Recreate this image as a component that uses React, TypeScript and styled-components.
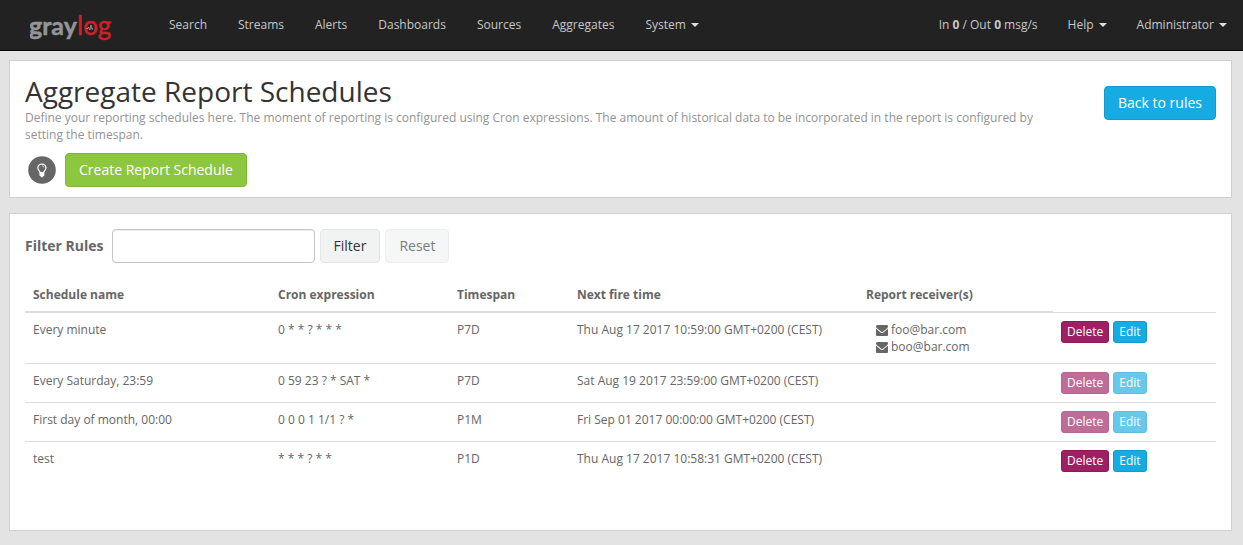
import React from "react";
import styled, { createGlobalStyle } from "styled-components";

const GlobalStyle = createGlobalStyle`
  *, *::before, *::after { box-sizing: border-box; }
  body {
    margin: 0;
    background: #e3e3e3;
    color: #666;
    font-family: "Open Sans", sans-serif;
    font-size: 12px;
    line-height: 17px;
  }
`;

const Navbar = styled.nav`
  display: flex;
  align-items: center;
  height: 51px;
  padding: 0 1px 0 30px;
  background: #222;
  border-bottom: 1px solid #080808;
`;

const Brand = styled.a`
  display: block;
  height: 36px;
  margin-right: 40px;
`;

const LogoText = styled.text<{ $red?: boolean }>`
  font-family: Lato, sans-serif;
  font-size: ${(p) => (p.$red ? 26 : 25)}px;
  font-weight: ${(p) => (p.$red ? 400 : 700)};
  fill: ${(p) => (p.$red ? "#cf2027" : "#939598")};
  stroke: ${(p) => (p.$red ? "#cf2027" : "#939598")};
  stroke-width: 0.5px;
`;

const NavList = styled.ul<{ $end?: boolean }>`
  display: flex;
  gap: ${(p) => (p.$end ? 0 : 1)}px;
  margin: 0;
  margin-left: ${(p) => (p.$end ? "auto" : 0)};
  padding: 0;
  list-style: none;
`;

const NavLink = styled.a`
  display: flex;
  align-items: center;
  padding: 15px;
  line-height: 20px;
  color: #c8c8c8;
  text-decoration: none;
  white-space: pre;
`;

const Caret = styled.span`
  margin-left: 5px;
  border-top: 4px solid #ddd;
  border-left: 4px solid transparent;
  border-right: 4px solid transparent;
`;

const Main = styled.main`
  display: flex;
  flex-direction: column;
  gap: 15px;
  padding: 9px 11px 14px 9px;
`;

const Panel = styled.section`
  padding: 15px;
  background: #fff;
  border: 1px solid #d1d1d1;
`;

const HeaderPanel = styled(Panel)`
  display: flex;
  justify-content: space-between;
  align-items: flex-start;
  padding-bottom: 10px;
`;

const RulesPanel = styled(Panel)`
  padding-bottom: 50px;
`;

const Intro = styled.div`
  width: 85%;
`;

const Title = styled.h1`
  margin: 0 0 2px;
  font-size: 28px;
  line-height: 31px;
  font-weight: 400;
  color: #333;
`;

const Description = styled.p`
  margin: 0 0 10px;
  color: #939393;
`;

const ActionRow = styled.div`
  display: flex;
  align-items: center;
  gap: 9px;
  padding-left: 3px;
`;

const tones = {
  success: { bg: "#8dc63f", line: "#7fb536", text: "#fff" },
  info: { bg: "#16ace3", line: "#1499ca", text: "#fff" },
  primary: { bg: "#9e1f63", line: "#891b56", text: "#fff" },
  plain: { bg: "#f1f3f3", line: "#e2e5e5", text: "#333" },
};

const Button = styled.button<{ $tone: keyof typeof tones; $small?: boolean }>`
  height: ${(p) => (p.$small ? 22 : 34)}px;
  padding: 0 ${(p) => (p.$small ? 5 : 13)}px;
  border: 1px solid ${(p) => tones[p.$tone].line};
  border-radius: ${(p) => (p.$small ? 3 : 4)}px;
  background: ${(p) => tones[p.$tone].bg};
  color: ${(p) => tones[p.$tone].text};
  font-family: inherit;
  font-size: ${(p) => (p.$small ? 12 : 14)}px;
  line-height: ${(p) => (p.$small ? 18 : 20)}px;
  white-space: nowrap;
  cursor: pointer;
  &:disabled {
    opacity: 0.65;
    cursor: not-allowed;
  }
`;

const BackButton = styled(Button)`
  margin-top: 10px;
`;

const FilterForm = styled.form`
  display: flex;
  align-items: center;
  gap: 5px;
  margin-bottom: 15px;
`;

const FilterLabel = styled.label`
  margin-right: 3px;
  font-size: 14px;
  line-height: 20px;
  font-weight: 700;
`;

const FilterInput = styled.input`
  width: 203px;
  height: 34px;
  padding: 6px 12px;
  border: 1px solid #c4c4c4;
  border-radius: 4px;
  background: #fff;
  box-shadow: inset 0 1px 1px rgba(0, 0, 0, 0.08);
  font: inherit;
  font-size: 14px;
`;

const Table = styled.table`
  width: 100%;
  table-layout: fixed;
  border-collapse: collapse;
`;

const Col = styled.col<{ $width: number }>`
  width: ${(p) => p.$width}px;
`;

const HeadCell = styled.th`
  padding: 8px;
  border-bottom: 2px solid #ddd;
  text-align: left;
  font-weight: 700;
`;

const Cell = styled.td`
  padding: 8px;
  border-top: 1px solid #ddd;
  vertical-align: top;
`;

const Buttons = styled.div`
  display: flex;
  gap: 4px;
`;

const Receivers = styled.ul`
  margin: 0;
  padding: 0 0 0 10px;
  list-style: none;
`;

const Receiver = styled.li`
  display: flex;
  align-items: center;
  gap: 3px;
`;

const Logo = () => (
  <svg width="84" height="36" viewBox="0 0 84 36" role="img" aria-label="graylog">
    <LogoText x="-1" y="28">gray</LogoText>
    <LogoText x="47" y="28" $red>log</LogoText>
    <path d="M56.500 21.500h1.300l.8-1.500 1.200 3 1.200-5 1.200 4.500.8-1.500" fill="none" stroke="#aaa" strokeWidth="0.800" />
  </svg>
);

const Bulb = () => (
  <svg width="28" height="28" viewBox="0 0 28 28" aria-hidden="true">
    <circle cx="14" cy="14" r="13.8" fill="#666" />
    <path
      d="M12.2 16.8c0-1.6-2.4-2.5-2.4-5a4.1 3.7 0 0 1 8.2 0c0 2.500-2.400 3.400-2.400 5z"
      fill="none"
      stroke="#fff"
      strokeWidth="1.200"
    />
    <path d="M14 9.800c1 0 2 .7 2 1.700" fill="none" stroke="#fff" strokeWidth=".7" />
    <path d="M11.500 16.300h4.800v3.400l-1.300.8-.5.700h-1.200l-.5-.7-1.300-.8z" fill="#fff" />
  </svg>
);

const Envelope = () => (
  <svg width="12" height="12" viewBox="0 128 1792 1536" preserveAspectRatio="none" fill="#666" aria-hidden="true">
    <path d="M1792 710v794q0 66-47 113t-113 47H160q-66 0-113-47T0 1504V710q44 49 101 87 362 246 497 345 57 42 92.500 65.500t94.500 48 110 24.500h2q51 0 110-24.500t94.500-48 92.500-65.500q170-123 498-345 57-39 100-87zm0-294q0 79-49 151t-122 123q-376 261-468 325-10 7-42.500 30.500t-54 38-52 32.500-57.500 27-50 9h-2q-23 0-50-9t-57.500-27-52-32.500-54-38T639 1015q-91-64-262-182.500T172 690q-62-42-117-115.500T0 438q0-78 41.500-130T160 256h1472q65 0 112.500 47t47.500 113z" />
  </svg>
);

const menu = ["Search", "Streams", "Alerts", "Dashboards", "Sources", "Aggregates"];
const columns = [245, 179, 120, 289, 195, 163];
const headings = ["Schedule name", "Cron expression", "Timespan", "Next fire time", "Report receiver(s)"];

type Schedule = {
  name: string;
  cron: string;
  span: string;
  next: string;
  receivers: string[];
  locked?: boolean;
};

const schedules: Schedule[] = [
  { name: "Every minute", cron: "0 * * ? * * *", span: "P7D", next: "Thu Aug 17 2017 10:59:00 GMT+0200 (CEST)", receivers: ["foo@bar.com", "boo@bar.com"] },
  { name: "Every Saturday, 23:59", cron: "0 59 23 ? * SAT *", span: "P7D", next: "Sat Aug 19 2017 23:59:00 GMT+0200 (CEST)", receivers: [], locked: true },
  { name: "First day of month, 00:00", cron: "0 0 0 1 1/1 ? *", span: "P1M", next: "Fri Sep 01 2017 00:00:00 GMT+0200 (CEST)", receivers: [], locked: true },
  { name: "test", cron: "* * * ? * *", span: "P1D", next: "Thu Aug 17 2017 10:58:31 GMT+0200 (CEST)", receivers: [] },
];

export default function App() {
  return (
    <>
      <GlobalStyle />
      <Navbar>
        <Brand href="#"><Logo /></Brand>
        <NavList>
          {menu.map((item) => (
            <li key={item}><NavLink href="#">{item}</NavLink></li>
          ))}
          <li><NavLink href="#">System<Caret /></NavLink></li>
        </NavList>
        <NavList $end>
          <li><NavLink href="#">In <b>0</b> / Out <b>0</b> msg/s</NavLink></li>
          <li><NavLink href="#">Help<Caret /></NavLink></li>
          <li><NavLink href="#">Administrator<Caret /></NavLink></li>
        </NavList>
      </Navbar>
      <Main>
        <HeaderPanel>
          <Intro>
            <Title>Aggregate Report Schedules</Title>
            <Description>
              Define your reporting schedules here. The moment of reporting is configured using Cron
              expressions. The amount of historical data to be incorporated in the report is
              configured by setting the timespan.
            </Description>
            <ActionRow>
              <Bulb />
              <Button type="button" $tone="success">Create Report Schedule</Button>
            </ActionRow>
          </Intro>
          <BackButton type="button" $tone="info">Back to rules</BackButton>
        </HeaderPanel>
        <RulesPanel>
          <FilterForm onSubmit={(e) => e.preventDefault()}>
            <FilterLabel htmlFor="filter">Filter Rules</FilterLabel>
            <FilterInput id="filter" type="text" />
            <Button type="submit" $tone="plain">Filter</Button>
            <Button type="reset" $tone="plain" disabled>Reset</Button>
          </FilterForm>
          <Table>
            <colgroup>
              {columns.map((width, i) => <Col key={i} $width={width} />)}
            </colgroup>
            <thead>
              <tr>
                {headings.map((h) => <HeadCell key={h} scope="col">{h}</HeadCell>)}
              </tr>
            </thead>
            <tbody>
              {schedules.map((s) => (
                <tr key={s.name}>
                  <Cell>{s.name}</Cell>
                  <Cell>{s.cron}</Cell>
                  <Cell>{s.span}</Cell>
                  <Cell>{s.next}</Cell>
                  <Cell>
                    {s.receivers.length > 0 && (
                      <Receivers>
                        {s.receivers.map((r) => <Receiver key={r}><Envelope />{r}</Receiver>)}
                      </Receivers>
                    )}
                  </Cell>
                  <Cell>
                    <Buttons>
                      <Button type="button" $tone="primary" $small disabled={s.locked}>Delete</Button>
                      <Button type="button" $tone="info" $small disabled={s.locked}>Edit</Button>
                    </Buttons>
                  </Cell>
                </tr>
              ))}
            </tbody>
          </Table>
        </RulesPanel>
      </Main>
    </>
  );
}
